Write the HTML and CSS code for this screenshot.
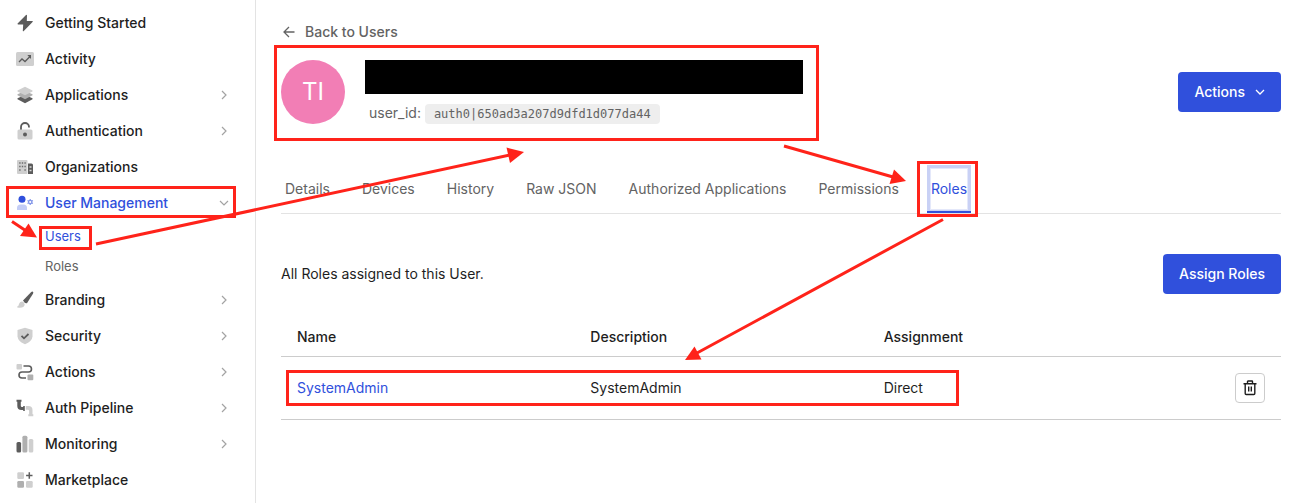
FILE: index.html
```html
<!DOCTYPE html>
<html lang="en">
<head>
<meta charset="utf-8">
<meta name="viewport" content="width=device-width, initial-scale=1">
<title>User Details</title>
<link rel="stylesheet" href="styles.css">
</head>
<body>
<svg class="defs" aria-hidden="true">
  <symbol id="chevron" viewBox="0 0 8 10"><path d="M2 1l4 4-4 4" fill="none" stroke="currentColor" stroke-width="1.2"/></symbol>
</svg>
<div class="app">
  <nav class="sidebar" aria-label="Main">
    <a class="item" href="#"><svg class="icon" viewBox="0 0 18 18"><path d="M10 1 1.600 9.600q-.4.7.4.9h5.200L6.800 17q.5.4 1 0l9-9.200q.3-.8-.6-.9h-5.400L11 1.200Q10.500.6 10 1z" fill="#5c5c5c"/></svg><span>Getting Started</span></a>
    <a class="item" href="#"><svg class="icon" viewBox="0 0 18 18"><rect y="2" width="18" height="14" rx="1.500" fill="#cfcfcf"/><path d="M3 12l3-3 3 2.500 5-5" fill="none" stroke="#5c5c5c" stroke-width="1.300"/><path d="M11.300 5H15v3.900z" fill="#5c5c5c"/></svg><span>Activity</span></a>
    <a class="item" href="#"><svg class="icon" viewBox="0 0 18 18"><path d="M1.500 12.300 9 9l7.500 3.300v1L9 17.300l-7.500-4z" fill="#5c5c5c"/><path d="M1.500 8.300 9 5l7.500 3.300v1L9 13.200l-7.500-3.900z" fill="#afafaf"/><path d="M1.500 4.500 9 .7l7.500 3.800v1L9 9.200 1.500 5.500z" fill="#cfcfcf"/></svg><span>Applications</span><svg class="chev"><use href="#chevron"/></svg></a>
    <a class="item" href="#"><svg class="icon" viewBox="0 0 18 18"><path d="M5 8V5a4 4 0 0 1 8 0v.5" fill="none" stroke="#5c5c5c" stroke-width="1.800"/><rect x="1.500" y="7.500" width="15" height="10" rx="1.500" fill="#cfcfcf"/><circle cx="9" cy="12.500" r="2" fill="#5c5c5c"/></svg><span>Authentication</span><svg class="chev"><use href="#chevron"/></svg></a>
    <a class="item" href="#"><svg class="icon" viewBox="0 0 18 18"><rect x="1" y="2" width="10.500" height="14" rx="1" fill="#cfcfcf"/><path d="M12 5.500h3.500q1.500 0 1.500 1.500V16h-5z" fill="#5c5c5c"/><path d="M3.200 5h1.400M5.800 5h1.400M8.400 5h1.400M3.200 8.500h1.400M5.800 8.500h1.400M8.400 8.500h1.400M3.200 12h1.400M8.400 12h1.400" stroke="#6c6c6c" stroke-width="1.500"/><path d="M13.500 9h2M13.500 12.500h2" stroke="#d8d8d8" stroke-width="1.500"/></svg><span>Organizations</span></a>
    <a class="item active" href="#"><svg class="icon" viewBox="0 0 18 18"><circle cx="6" cy="5.200" r="3.500" fill="#3050dc"/><path d="M1 16v-2q0-3.500 3.500-3.500h3q3.500 0 3.500 3.500v2z" fill="#c3cdf6"/><circle cx="14.200" cy="8" r="1.700" fill="none" stroke="#8397e9" stroke-width="1.300"/><path d="M14.200 5v1M14.200 10v1M11.500 6.500l1 .6M15.900 8.900l1 .6M11.500 9.500l1-.6M15.900 7.100l1-.6" stroke="#8397e9" stroke-width="1.200"/></svg><span>User Management</span><svg class="chev down"><use href="#chevron"/></svg></a>
    <div class="sub">
      <a class="subitem current" href="#">Users</a>
      <a class="subitem" href="#">Roles</a>
    </div>
    <a class="item" href="#"><svg class="icon" viewBox="0 0 18 18"><path d="M7 9.500 15 1.200q1-.9 1.900-.5.8.5.200 1.800L11 12.200q-2.500.300-4-2.700z" fill="#5c5c5c"/><path d="M6.200 10.500q2 .5 2.500 3-.7 4-7.200 3-1-.4-.1-1Q2.700 15 3 13q.8-2.800 3.200-2.500z" fill="#cfcfcf"/></svg><span>Branding</span><svg class="chev"><use href="#chevron"/></svg></a>
    <a class="item" href="#"><svg class="icon" viewBox="0 0 18 18"><path d="M9 .7 16.500 3v6.500Q16 14.500 9 17.300 2 14.500 1.500 9.500V3z" fill="#cfcfcf"/><path d="m5.500 8.800 2.500 2.500L12.500 7" fill="none" stroke="#5c5c5c" stroke-width="1.800"/></svg><span>Security</span><svg class="chev"><use href="#chevron"/></svg></a>
    <a class="item" href="#"><svg class="icon" viewBox="0 0 18 18"><rect x=".5" y="1" width="5.500" height="5.500" rx="1" fill="#cfcfcf"/><rect x="11.500" y="11.500" width="5.800" height="5.800" rx="1" fill="#afafaf"/><path d="M7.500 3h5a3 3 0 0 1 0 6H6a3 3 0 0 0 0 6h4" fill="none" stroke="#5c5c5c" stroke-width="1.600"/></svg><span>Actions</span><svg class="chev"><use href="#chevron"/></svg></a>
    <a class="item" href="#"><svg class="icon" viewBox="0 0 18 18"><path d="M.5.8h5v2h-.7v4q0 1.200 1.200 1.200h1.200V7h1.600v5H7.200v-1H5.500Q1.300 11 1.300 7V2.800H.5z" fill="#5c5c5c"/><path d="M9.800 7h2.500q4.200 0 4.200 4v4.300h.8v1.900h-5v-1.900h.8V12q0-1.200-1.300-1.200h-2z" fill="#cfcfcf"/></svg><span>Auth Pipeline</span><svg class="chev"><use href="#chevron"/></svg></a>
    <a class="item" href="#"><svg class="icon" viewBox="0 0 18 18"><rect x=".5" y="7" width="4.600" height="10.500" rx="1.500" fill="#5c5c5c"/><rect x="6.400" y=".8" width="5" height="16.700" rx="1.500" fill="#afafaf"/><rect x="12.700" y="4" width="4.600" height="13.500" rx="1.500" fill="#cfcfcf"/></svg><span>Monitoring</span><svg class="chev"><use href="#chevron"/></svg></a>
    <a class="item" href="#"><svg class="icon" viewBox="0 0 18 18"><rect x="1.300" y="1.300" width="6.700" height="6.700" rx="1.200" fill="#cfcfcf"/><rect x="1.300" y="10" width="6.700" height="6.700" rx="1.200" fill="#afafaf"/><rect x="10" y="10" width="6.700" height="6.700" rx="1.200" fill="#cfcfcf"/><path d="M13.300 1.300v6.400M10.100 4.500h6.400" stroke="#5c5c5c" stroke-width="1.500"/></svg><span>Marketplace</span></a>
  </nav>

  <main class="main">
    <a class="back" href="#"><svg class="arrow" viewBox="0 0 12 12"><path d="M11.500 6H1.300M6 1 1 6l5 5" fill="none" stroke="currentColor" stroke-width="1.300"/></svg>Back to Users</a>
    <header class="profile">
      <div class="avatar">TI</div>
      <div class="identity">
        <div class="redacted"></div>
        <div class="userid">user_id: <code>auth0|650ad3a207d9dfd1d077da44</code></div>
      </div>
      <button class="btn" type="button">Actions<svg class="caret" viewBox="0 0 10 6"><path d="m1 1 4 4 4-4" fill="none" stroke="currentColor" stroke-width="1.300"/></svg></button>
    </header>
    <nav class="tabs" aria-label="User sections">
      <a href="#">Details</a><a href="#">Devices</a><a href="#">History</a><a href="#">Raw JSON</a><a href="#">Authorized Applications</a><a href="#">Permissions</a><a class="selected" href="#" aria-current="page">Roles</a>
    </nav>
    <div class="intro">
      <p>All Roles assigned to this User.</p>
      <button class="btn" type="button">Assign Roles</button>
    </div>
    <table class="roles">
      <thead><tr><th>Name</th><th>Description</th><th>Assignment</th><th class="tools" aria-label="Remove"></th></tr></thead>
      <tbody><tr>
        <td><a href="#">SystemAdmin</a></td><td>SystemAdmin</td><td>Direct</td>
        <td class="tools"><button class="trash" type="button" aria-label="Remove role"><svg viewBox="0 0 14 16"><path d="M4.500 3.500v-2q0-.5.500-.5h4q.5 0 .5.500v2M0.500 3.700h13M2.200 4v9.500q0 1 1 1h7.600q1 0 1-1V4M5.700 6.500v5M8.300 6.500v5" fill="none" stroke="currentColor" stroke-width="1.400"/></svg></button></td>
      </tr></tbody>
    </table>
  </main>

  <svg class="notes" width="1295" height="503" aria-hidden="true">
    <g fill="none" stroke="#ff231a" stroke-width="3">
      <rect x="7.500" y="187.500" width="227" height="29"/>
      <rect x="40.500" y="227.500" width="50" height="21"/>
      <rect x="275.500" y="46.500" width="542" height="93"/>
      <rect x="918.500" y="162.500" width="58" height="53"/>
      <rect x="287.500" y="371.500" width="670" height="33"/>
      <path d="M12 221.500 27 231.500M96 244l414-89M784 146l109 31M943 219.500 697 353"/>
    </g>
    <g fill="#ff231a">
      <path d="M37 237.500 28.500 223.500 20 236z"/>
      <path d="M524 152 506.500 147.500 510 163z"/>
      <path d="M906 181 894 169.500 889.500 184z"/>
      <path d="M685 360 694.500 346.500 701.500 359.500z"/>
    </g>
  </svg>
</div>
</body>
</html>
```

FILE: styles.css
```css
* { box-sizing: border-box; }

body {
  margin: 0;
  background: #fff;
  color: #1e1e1e;
  font: 14px/20px Inter, "Liberation Sans", sans-serif;
}

a { color: inherit; text-decoration: none; }
.defs { display: none; }

.app { position: relative; display: flex; min-height: 100vh; overflow: hidden; }

.sidebar {
  flex: none;
  width: 256px;
  padding: 5px 27px 0 16px;
  border-right: 1px solid #e3e3e3;
}
.item { display: flex; align-items: center; gap: 11px; height: 36px; font-weight: 500; }
.icon { width: 18px; height: 18px; flex: none; }
.chev { width: 8px; height: 10px; margin-left: auto; color: #a3a3a3; }
.down { transform: rotate(90deg); }
.active { color: #3050dc; }
.sub { padding: 0 0 1px 29px; }
.subitem { display: block; font-size: 13px; line-height: 30px; color: #636363; }
.current { color: #3050dc; }

.main { flex: 1; min-width: 0; padding: 22px 14px 24px 25px; }
.back { display: inline-flex; align-items: center; gap: 10px; padding-left: 2px; color: #636363; font-weight: 500; }
.arrow { width: 12px; height: 12px; }

.profile { display: flex; align-items: center; gap: 20px; margin-top: 17px; }
.avatar {
  width: 64px;
  height: 64px;
  border-radius: 50%;
  background: #f27eb5;
  color: #fff;
  font-size: 24px;
  line-height: 64px;
  text-align: center;
}
.identity { flex: 1; }
.redacted { width: 438px; height: 34px; background: #000; }
.userid { margin-top: 9px; padding-left: 4px; color: #636363; }
.userid code {
  display: inline-block;
  padding: 0 9px;
  border-radius: 4px;
  background: #eee;
  font: 12px/20px "DejaVu Sans Mono", monospace;
}

.btn {
  display: flex;
  align-items: center;
  gap: 10px;
  height: 40px;
  padding: 0 16px;
  border: 0;
  border-radius: 4px;
  background: #3050dc;
  color: #fff;
  font: inherit;
  font-weight: 500;
}
.caret { width: 10px; height: 6px; }

.tabs { display: flex; gap: 24px; margin-top: 41px; border-bottom: 1px solid #e3e3e3; color: #636363; }
.tabs a { padding: 0 4px; line-height: 48px; white-space: nowrap; }
.tabs .selected {
  color: #3050dc;
  box-shadow: inset 0 -2px #3050dc, inset 0 0 0 3px #c9d1f5, inset 0 0 0 4px #e4e8fa;
}

.intro { display: flex; align-items: center; justify-content: space-between; margin-top: 40px; }
.intro p { margin: 0; }

.roles { width: 100%; margin-top: 24px; border-collapse: collapse; table-layout: fixed; text-align: left; }
.roles th { height: 38px; padding: 0 16px; font-weight: 500; border-bottom: 1px solid #ccc; }
.roles td { height: 63px; padding: 0 16px; border-bottom: 1px solid #ccc; }
.roles a { color: #3050dc; }
.roles .tools { width: 120px; }
.trash {
  display: flex;
  align-items: center;
  justify-content: center;
  width: 30px;
  height: 30px;
  margin-left: auto;
  padding: 0;
  border: 1px solid #ccc;
  border-radius: 4px;
  background: #fff;
  color: #1e1e1e;
}
.trash svg { width: 14px; height: 16px; }

/* Walkthrough highlights drawn over the console */
.notes { position: absolute; top: 0; left: 0; pointer-events: none; }
```
